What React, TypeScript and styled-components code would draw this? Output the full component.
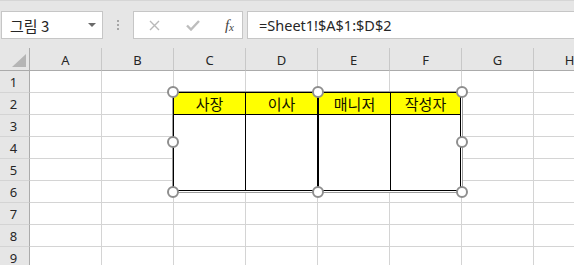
import React from "react";
import styled, { createGlobalStyle } from "styled-components";

const GlobalStyle = createGlobalStyle`
  html, body {
    margin: 0;
    padding: 0;
    background: #ffffff;
    overflow: hidden;
  }
  body {
    font-family: "Noto Sans", "Noto Sans CJK KR", sans-serif;
  }
`;

const COLUMNS = ["A", "B", "C", "D", "E", "F", "G", "H"];
const ROWS = [1, 2, 3, 4, 5, 6, 7, 8, 9];
const HEADERS = ["사장", "이사", "매니저", "작성자"];

function App() {
  return (
    <Window>
      <GlobalStyle />
      <FormulaToolbar />
      <Sheet>
        <CornerCell>
          <svg width="14" height="13" viewBox="0 0 14 13">
            <polygon points="14,0 14,13 0,13" fill="#b5b5b5" />
          </svg>
        </CornerCell>
        {COLUMNS.map((c) => (
          <ColumnHeader key={c}>{c}</ColumnHeader>
        ))}
        {ROWS.map((r) => (
          <React.Fragment key={r}>
            <RowHeader>{r}</RowHeader>
            {COLUMNS.map((c) => (
              <Cell key={c} />
            ))}
          </React.Fragment>
        ))}
        <PictureFrame>
          <PictureTable>
            {HEADERS.map((h, i) => (
              <TitleCell key={h} $index={i}>
                {h}
              </TitleCell>
            ))}
            {HEADERS.map((h, i) => (
              <BodyCell key={h} $index={i} />
            ))}
          </PictureTable>
          <Handle $x={0} $y={0} />
          <Handle $x={50} $y={0} />
          <Handle $x={100} $y={0} />
          <Handle $x={0} $y={50} />
          <Handle $x={100} $y={50} />
          <Handle $x={0} $y={100} />
          <Handle $x={50} $y={100} />
          <Handle $x={100} $y={100} />
        </PictureFrame>
      </Sheet>
    </Window>
  );
}

function FormulaToolbar() {
  return (
    <Toolbar>
      <NameBox>
        <NameText>그림 3</NameText>
        <svg width="8" height="4" viewBox="0 0 8 4">
          <polygon points="0,0 8,0 4,4" fill="#6a6a6a" />
        </svg>
      </NameBox>
      <Grip>
        <span />
        <span />
        <span />
      </Grip>
      <ActionBox>
        <ActionIcon>
          <svg width="11" height="11" viewBox="0 0 11 11">
            <path d="M1 1 L10 10 M10 1 L1 10" stroke="#b9b9b9" strokeWidth="1.4" fill="none" />
          </svg>
        </ActionIcon>
        <ActionIcon>
          <svg width="14" height="11" viewBox="0 0 14 11">
            <path d="M1 5.5 L5 9.5 L13 1" stroke="#bdbdbd" strokeWidth="2.4" fill="none" />
          </svg>
        </ActionIcon>
        <FxLabel>
          f<sub>x</sub>
        </FxLabel>
      </ActionBox>
      <FormulaInput>=Sheet1!$A$1:$D$2</FormulaInput>
    </Toolbar>
  );
}

const Window = styled.div`
  width: 574px;
  height: 265px;
  overflow: hidden;
  background: #ffffff;
`;

const Toolbar = styled.div`
  display: flex;
  align-items: center;
  height: 48px;
  box-sizing: border-box;
  padding: 10px 0 9px 1px;
  background: #e6e6e6;
  border-top: 1px solid #d6d6d6;
`;

const Box = styled.div`
  height: 28px;
  box-sizing: border-box;
  background: #ffffff;
  border: 1px solid #c6c6c6;
  display: flex;
  align-items: center;
`;

const NameBox = styled(Box)`
  width: 102px;
  padding: 0 6px 0 8px;
  justify-content: space-between;
`;

const NameText = styled.span`
  font-family: "Noto Sans CJK KR", "Noto Sans", sans-serif;
  font-size: 15px;
  color: #262626;
`;

const Grip = styled.div`
  width: 30px;
  display: flex;
  flex-direction: column;
  align-items: center;
  gap: 2px;
  span {
    width: 2px;
    height: 2px;
    background: #a6a6a6;
  }
`;

const ActionBox = styled(Box)`
  width: 110px;
  padding: 0 8px 0 12px;
  justify-content: space-between;
`;

const ActionIcon = styled.span`
  display: flex;
  width: 16px;
  justify-content: center;
`;

const FxLabel = styled.span`
  font-family: "Liberation Serif", serif;
  font-style: italic;
  font-size: 15px;
  color: #444444;
  sub {
    font-size: 11px;
    vertical-align: -1px;
  }
`;

const FormulaInput = styled(Box)`
  flex: 1;
  margin-left: 4px;
  border-right: none;
  padding-left: 11px;
  font-family: "Noto Sans", sans-serif;
  font-size: 14.5px;
  color: #262626;
`;

const Sheet = styled.div`
  position: relative;
  display: grid;
  grid-template-columns: 30px repeat(8, 72px);
  grid-template-rows: 23px repeat(9, 22px);
`;

const HeaderBase = styled.div`
  box-sizing: border-box;
  background: #e6e6e6;
  display: flex;
  align-items: center;
  justify-content: center;
  font-family: "Noto Sans", sans-serif;
  font-size: 13px;
  color: #262626;
`;

const CornerCell = styled(HeaderBase)`
  border-right: 1px solid #ababab;
  border-bottom: 1px solid #ababab;
  align-items: flex-end;
  justify-content: flex-end;
  padding: 0 3px 3px 0;
`;

const ColumnHeader = styled(HeaderBase)`
  border-right: 1px solid #c8c8c8;
  border-bottom: 1px solid #ababab;
  padding-top: 1px;
`;

const RowHeader = styled(HeaderBase)`
  border-right: 1px solid #ababab;
  border-bottom: 1px solid #d4d4d4;
  padding-right: 2px;
`;

const Cell = styled.div`
  box-sizing: border-box;
  border-right: 1px solid #d4d4d4;
  border-bottom: 1px solid #d4d4d4;
`;

const PictureFrame = styled.div`
  position: absolute;
  left: 172px;
  top: 43px;
  width: 291px;
  height: 102px;
  box-sizing: border-box;
  border: 1px solid #9c9c9c;
  background: #ffffff;
`;

const PictureTable = styled.div`
  display: grid;
  grid-template-columns: 72px 73px 72px 70px;
  grid-template-rows: 22px 76px;
  box-sizing: border-box;
  width: 288px;
  border-left: 1px solid #000000;
  border-top: 1px solid #000000;
`;

const TableCell = styled.div<{ $index: number }>`
  box-sizing: border-box;
  border-right: ${(p) => (p.$index === 1 ? 2 : 1)}px solid #000000;
  border-bottom: 1px solid #000000;
`;

const TitleCell = styled(TableCell)`
  background: #ffff00;
  display: flex;
  align-items: center;
  justify-content: center;
  font-family: "Noto Sans CJK KR", sans-serif;
  font-size: 15px;
  color: #111100;
  padding-bottom: 1px;
`;

const BodyCell = styled(TableCell)``;

const Handle = styled.span<{ $x: number; $y: number }>`
  position: absolute;
  left: ${(p) => p.$x}%;
  top: ${(p) => p.$y}%;
  width: 12px;
  height: 12px;
  box-sizing: border-box;
  border-radius: 50%;
  border: 2px solid #8e8e8e;
  background: #ffffff;
  transform: translate(-50%, -50%);
`;

export default App;
